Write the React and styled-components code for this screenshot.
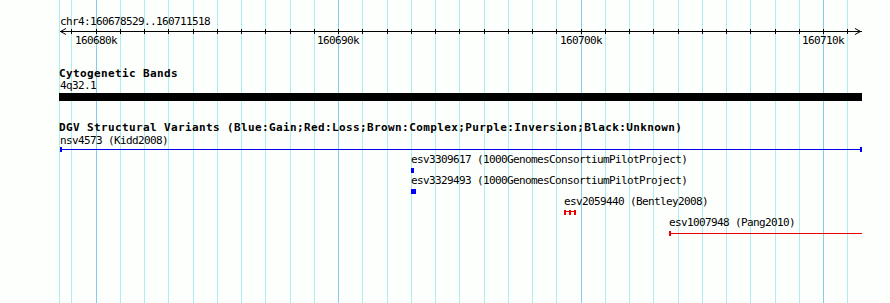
import styled, { createGlobalStyle } from "styled-components";

const VIEW_START = 160678529;
const VIEW_END = 160711518;
const TRACK_LEFT = 59;
const TRACK_RIGHT = 862;

// pixel position of a base pair on the page
const toX = (bp) => Math.floor(96 + ((bp - 160680000) / 1000) * 24.25);
const clipX = (x) => Math.max(TRACK_LEFT, Math.min(TRACK_RIGHT, x));

const GlobalStyle = createGlobalStyle`
  html, body {
    margin: 0;
    padding: 0;
    background: #fdfffd;
  }
`;

const Panel = styled.div`
  position: relative;
  width: 890px;
  height: 303px;
  overflow: hidden;
  background: #fdfffd;
  font-family: "DejaVu Sans Mono", "Liberation Mono", monospace;
  color: #000;
`;

const GridLayer = styled.div`
  position: absolute;
  inset: 0;
  z-index: 0;
`;

const GridLine = styled.div`
  position: absolute;
  top: 0;
  bottom: 0;
  width: 1px;
  background: ${(p) => (p.$major ? "#84cdee" : "#aeeeee")};
`;

const Tracks = styled.div`
  position: relative;
  z-index: 1;
  display: flex;
  flex-direction: column;
  margin-left: ${TRACK_LEFT}px;
  width: ${TRACK_RIGHT - TRACK_LEFT}px;
  padding-top: 16px;
`;

const SmallText = styled.div`
  font-size: 11px;
  line-height: 12px;
  letter-spacing: -0.62px;
  white-space: pre;
`;

const RulerTrack = styled.div`
  display: flex;
  flex-direction: column;
`;

const RulerLabel = styled(SmallText)`
  padding-left: 1px;
`;

const Axis = styled.svg`
  display: block;
  shape-rendering: crispEdges;
`;

const TickLabels = styled.div`
  position: relative;
  height: 12px;
`;

const TickLabel = styled(SmallText)`
  position: absolute;
  top: 0;
  transform: translateX(-50%);
`;

const Track = styled.div`
  display: flex;
  flex-direction: column;
  margin-top: 20px;
`;

const TrackTitle = styled.div`
  font-size: 11px;
  font-weight: bold;
  line-height: 13px;
  letter-spacing: 0.38px;
  white-space: pre;
`;

const FeatureLabel = styled(SmallText)`
  padding-left: 1px;
`;

const Band = styled.div`
  height: 8px;
  margin-top: 1px;
  background: #000;
`;

const FeatureRow = styled.div`
  display: flex;
  flex-direction: column;
  align-items: flex-start;
  height: ${(p) => p.$height}px;
`;

const RowLabel = styled(SmallText)`
  margin-top: 1px;
`;

const Glyph = styled.svg`
  display: block;
  shape-rendering: crispEdges;
  margin-top: ${(p) => p.$offset}px;
`;

const rulerTicks = [];
for (let k = -1; k <= 31; k++) {
  rulerTicks.push({ x: toX(160680000 + k * 1000), major: k % 10 === 0 });
}

const features = [
  { name: "nsv4573", source: "Kidd2008", start: 160678529, end: 160711600, type: "line", color: "#0000ee", caps: [true, true], rowHeight: 19, offset: 0 },
  { name: "esv3309617", source: "1000GenomesConsortiumPilotProject", start: 160692990, end: 160693150, type: "box", color: "#0000ff", rowHeight: 21, offset: 2 },
  { name: "esv3329493", source: "1000GenomesConsortiumPilotProject", start: 160693030, end: 160693200, type: "box", color: "#0000ff", rowHeight: 21, offset: 2 },
  { name: "esv2059440", source: "Bentley2008", start: 160699300, end: 160699800, type: "segments", color: "#ee0000", rowHeight: 21, offset: 2 },
  { name: "esv1007948", source: "Pang2010", start: 160703670, end: 160760000, type: "line", color: "#ee0000", caps: [true, false], rowHeight: 21, offset: 2 },
];

const AxisDrawing = () => {
  const w = TRACK_RIGHT - TRACK_LEFT;
  return (
    <Axis width={w} height={7}>
      <line x1={1} y1={3.5} x2={w} y2={3.5} stroke="#000" />
      <polyline points="7,0.5 1.5,3.5 7,6.5" fill="none" stroke="#000" shapeRendering="auto" />
      <polyline points={`${w - 7},0.5 ${w - 1.5},3.5 ${w - 7},6.5`} fill="none" stroke="#000" shapeRendering="auto" />
      {rulerTicks.map((t) => (
        <line key={t.x} x1={t.x - TRACK_LEFT + 0.5} y1={1} x2={t.x - TRACK_LEFT + 0.5} y2={6} stroke="#000" />
      ))}
    </Axis>
  );
};

const FeatureGlyph = ({ f, x0, x1 }) => {
  const w = x1 - x0;
  if (f.type === "box") {
    return (
      <Glyph width={w} height={5} $offset={f.offset}>
        <rect x={0} y={0} width={w} height={5} fill={f.color} />
      </Glyph>
    );
  }
  if (f.type === "segments") {
    return (
      <Glyph width={w} height={5} $offset={f.offset}>
        <rect x={0} y={0} width={2} height={5} fill={f.color} />
        <rect x={5} y={0} width={2} height={5} fill={f.color} />
        <rect x={10} y={0} width={2} height={5} fill={f.color} />
        <rect x={0} y={1} width={w} height={1} fill={f.color} />
      </Glyph>
    );
  }
  return (
    <Glyph width={w} height={5} $offset={f.offset}>
      <rect x={0} y={2} width={w} height={1} fill={f.color} />
      {f.caps[0] && <rect x={0} y={0} width={2} height={5} fill={f.color} />}
      {f.caps[1] && <rect x={w - 2} y={0} width={2} height={5} fill={f.color} />}
    </Glyph>
  );
};

const App = () => {
  return (
    <Panel>
      <GlobalStyle />
      <GridLayer>
        <GridLine style={{ left: TRACK_LEFT }} />
        {rulerTicks.map((t) => (
          <GridLine key={t.x} style={{ left: t.x }} $major={t.major} />
        ))}
      </GridLayer>
      <Tracks>
        <RulerTrack>
          <RulerLabel>chr4:{VIEW_START}..{VIEW_END}</RulerLabel>
          <AxisDrawing />
          <TickLabels>
            {rulerTicks.filter((t) => t.major).map((t, i) => (
              <TickLabel key={t.x} style={{ left: t.x - TRACK_LEFT }}>
                {160680 + i * 10}k
              </TickLabel>
            ))}
          </TickLabels>
        </RulerTrack>

        <Track>
          <TrackTitle>Cytogenetic Bands</TrackTitle>
          <FeatureLabel>4q32.1</FeatureLabel>
          <Band />
        </Track>

        <Track>
          <TrackTitle>DGV Structural Variants (Blue:Gain;Red:Loss;Brown:Complex;Purple:Inversion;Black:Unknown)</TrackTitle>
          {features.map((f) => {
            const x0 = clipX(toX(f.start));
            const x1 = clipX(toX(f.end));
            return (
              <FeatureRow key={f.name} $height={f.rowHeight} style={{ paddingLeft: x0 - TRACK_LEFT }}>
                <RowLabel>{f.name} ({f.source})</RowLabel>
                <FeatureGlyph f={f} x0={x0} x1={x1} />
              </FeatureRow>
            );
          })}
        </Track>
      </Tracks>
    </Panel>
  );
};

export default App;
